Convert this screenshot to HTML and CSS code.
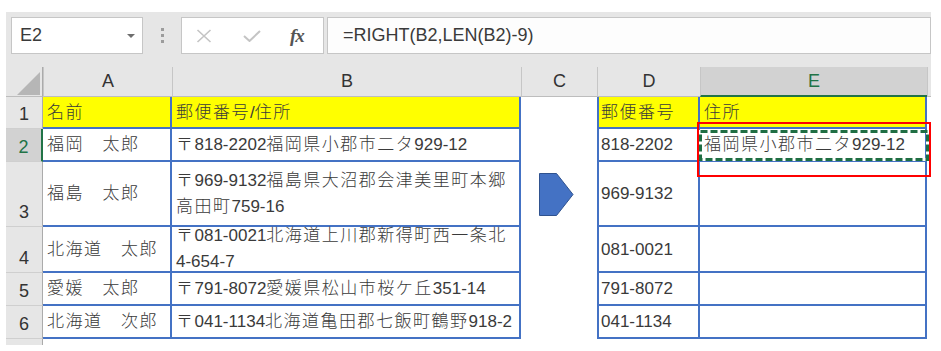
FILE: index.html
```html
<!DOCTYPE html>
<html lang="ja">
<head>
<meta charset="utf-8">
<title>Excel RIGHT LEN</title>
<link rel="stylesheet" href="styles.css">
</head>
<body>
<div class="screen">
  <div class="toolbar">
    <div class="namebox"><span class="nb-text">E2</span><span class="nb-arrow"></span></div>
    <div class="grip"><i></i><i></i><i></i></div>
    <div class="fbtns">
      <svg class="ico-x" width="16" height="14" viewBox="0 0 16 14"><path d="M1.5 1 L14.5 13 M14.5 1 L1.5 13" stroke="#c4c4c4" stroke-width="1.6" fill="none"/></svg>
      <svg class="ico-check" width="18" height="12" viewBox="0 0 18 12"><path d="M1 6 L6.5 11 L17 1" stroke="#c4c4c4" stroke-width="2" fill="none"/></svg>
      <span class="fx"><i>f</i><i>x</i></span>
    </div>
    <div class="formula">=RIGHT(B2,LEN(B2)-9)</div>
  </div>

  <div class="sheet">
    <!-- column headers -->
    <div class="corner"><svg width="23" height="23" viewBox="0 0 23 23"><polygon points="23,0 23,23 0,23" fill="#b6b6b6"/></svg></div>
    <div class="ch">A</div>
    <div class="ch">B</div>
    <div class="ch">C</div>
    <div class="ch">D</div>
    <div class="ch ch-sel">E</div>
    <div class="ch tail"></div>

    <!-- row 1 -->
    <div class="rh">1</div>
    <div class="c t y"><span class="j">名前</span></div>
    <div class="c t y"><span class="j">郵便番号</span>/<span class="j">住所</span></div>
    <div class="c"></div>
    <div class="c t tl y d"><span class="j">郵便番号</span></div>
    <div class="c t y"><span class="j">住所</span></div>
    <div></div>

    <!-- row 2 -->
    <div class="rh rh-sel">2</div>
    <div class="c t"><span class="j">福岡　太郎</span></div>
    <div class="c t"><span class="j">〒</span>818-2202<span class="j">福岡県小郡市二タ</span>929-12</div>
    <div class="c"></div>
    <div class="c t tl d">818-2202</div>
    <div class="c t e2"><span class="j">福岡県小郡市二タ</span>929-12
      <svg class="marquee" width="230" height="31" viewBox="0 0 230 31"><rect x="1.5" y="1.5" width="227" height="28" fill="none" stroke="#ffffff" stroke-width="3"/><rect x="1.5" y="1.5" width="227" height="28" fill="none" stroke="#1f6e43" stroke-width="3" stroke-dasharray="7 3"/></svg>
    </div>
    <div></div>

    <!-- row 3 -->
    <div class="rh">3</div>
    <div class="c t"><span class="j">福島　太郎</span></div>
    <div class="c t"><div class="ml"><span class="j">〒</span>969‐9132<span class="j">福島県大沼郡会津美里町本郷</span><br><span class="j">高田町</span>759-16</div></div>
    <div class="c arrow-cell"><svg width="35" height="43" viewBox="0 0 35 43"><polygon points="0.5,0.5 17.5,0.5 34,21.5 17.5,42.5 0.5,42.5" fill="#4472c4" stroke="#2f528f" stroke-width="1"/></svg></div>
    <div class="c t tl d">969‐9132</div>
    <div class="c t"></div>
    <div></div>

    <!-- row 4 -->
    <div class="rh">4</div>
    <div class="c t"><span class="j">北海道　太郎</span></div>
    <div class="c t"><div class="ml"><span class="j">〒</span>081-0021<span class="j">北海道上川郡新得町西一条北</span><br>4-654-7</div></div>
    <div class="c"></div>
    <div class="c t tl d">081-0021</div>
    <div class="c t"></div>
    <div></div>

    <!-- row 5 -->
    <div class="rh">5</div>
    <div class="c t"><span class="j">愛媛　太郎</span></div>
    <div class="c t"><span class="j">〒</span>791-8072<span class="j">愛媛県松山市桜ケ丘</span>351-14</div>
    <div class="c"></div>
    <div class="c t tl d">791-8072</div>
    <div class="c t"></div>
    <div></div>

    <!-- row 6 -->
    <div class="rh">6</div>
    <div class="c t"><span class="j">北海道　次郎</span></div>
    <div class="c t"><span class="j">〒</span>041-1134<span class="j">北海道亀田郡七飯町鶴野</span>918-2</div>
    <div class="c"></div>
    <div class="c t tl d">041-1134</div>
    <div class="c t"></div>
    <div></div>

    <!-- partial row 7 -->
    <div class="rh rh-stub"></div>
  </div>

  <div class="red-box"></div>
</div>
</body>
</html>
```

FILE: styles.css
```css
* { box-sizing: border-box; }

html, body {
  margin: 0;
  padding: 0;
  background: #ffffff;
}

body {
  font-family: "Liberation Sans", "Noto Sans CJK JP", sans-serif;
  color: #3a3a3a;
}

.screen {
  position: relative;
  width: 941px;
  height: 351px;
  padding: 12px 10px 0 6px;
  overflow: hidden;
}

/* ---------- formula bar ---------- */
.toolbar {
  display: flex;
  align-items: flex-start;
  height: 55px;
  background: #e6e6e6;
  padding: 5px 0 0 5px;
}

.namebox {
  width: 132px;
  height: 37px;
  background: #ffffff;
  border: 1px solid #c6c6c6;
  display: flex;
  align-items: center;
  padding-left: 8px;
  font-size: 18px;
  color: #3a3a3a;
}

.nb-text { flex: 1; }

.nb-arrow {
  width: 0;
  height: 0;
  border-left: 4px solid transparent;
  border-right: 4px solid transparent;
  border-top: 4px solid #6e6e6e;
  margin-right: 7px;
}

.grip {
  display: flex;
  flex-direction: column;
  gap: 3px;
  margin-left: 18px;
  padding-top: 11px;
}

.grip i {
  display: block;
  width: 3px;
  height: 3px;
  background: #9c9c9c;
}

.fbtns {
  display: flex;
  align-items: center;
  width: 143px;
  height: 37px;
  margin-left: 17px;
  background: #ffffff;
  border: 1px solid #c6c6c6;
}

.ico-x { margin-left: 14px; }
.ico-check { margin-left: 31px; }

.fx {
  margin-left: 29px;
  font-family: "Liberation Serif", serif;
  font-weight: bold;
  font-size: 19px;
  color: #555555;
  letter-spacing: -1px;
}

.formula {
  flex: 1;
  height: 37px;
  margin-left: 3px;
  background: #fdfdfd;
  border: 1px solid #c6c6c6;
  padding-left: 15px;
  font-size: 18px;
  line-height: 35px;
  color: #3a3a3a;
}

/* ---------- sheet grid ---------- */
.sheet {
  display: grid;
  grid-template-columns: 37px 129px 349px 76px 103px 227px 4px;
  grid-template-rows: 30px 32px 33px 65px 46px 33px 33px 6px;
}

.corner {
  display: flex;
  justify-content: flex-end;
  align-items: flex-end;
  padding: 0 2px 1px 0;
  background: #e6e6e6;
  border-bottom: 1px solid #bdbdbd;
  border-right: 1px solid #ababab;
}

.ch {
  display: flex;
  justify-content: center;
  align-items: center;
  background: #e6e6e6;
  border-left: 1px solid #c6c6c6;
  border-bottom: 1px solid #bdbdbd;
  font-size: 18px;
  color: #333333;
}

.ch-sel {
  background: #d2d2d2;
  color: #217346;
  border-bottom: 2px solid #217346;
}

.ch.tail { border-left: 1px solid #c6c6c6; }

.rh {
  display: flex;
  justify-content: center;
  align-items: flex-end;
  padding-bottom: 5px;
  background: #e6e6e6;
  border-right: 1px solid #ababab;
  border-bottom: 1px solid #cfcfcf;
  font-size: 18px;
  line-height: 18px;
  color: #333333;
}

.rh-sel {
  background: #d2d2d2;
  color: #217346;
  border-right: 2px solid #217346;
}

.rh-stub { border-bottom: none; }

.c {
  display: flex;
  align-items: center;
  padding-left: 4px;
  background: #ffffff;
  font-size: 17px;
  line-height: 25px;
  white-space: nowrap;
  color: #3a3a3a;
}

.c.d { padding-left: 2px; }

.t {
  border-right: 2px solid #4472c4;
  border-bottom: 2px solid #4472c4;
}

.tl { border-left: 2px solid #4472c4; }

.y { background: #ffff00; }

.j {
  letter-spacing: 1.5px;
  font-weight: 300;
}

.ml { line-height: 26px; }

.arrow-cell { padding-left: 18px; }

.e2 { position: relative; }

.marquee {
  position: absolute;
  left: -1px;
  top: 1px;
}

.red-box {
  position: absolute;
  left: 697px;
  top: 122px;
  width: 234px;
  height: 55px;
  border: 2px solid #ff0000;
}
```
